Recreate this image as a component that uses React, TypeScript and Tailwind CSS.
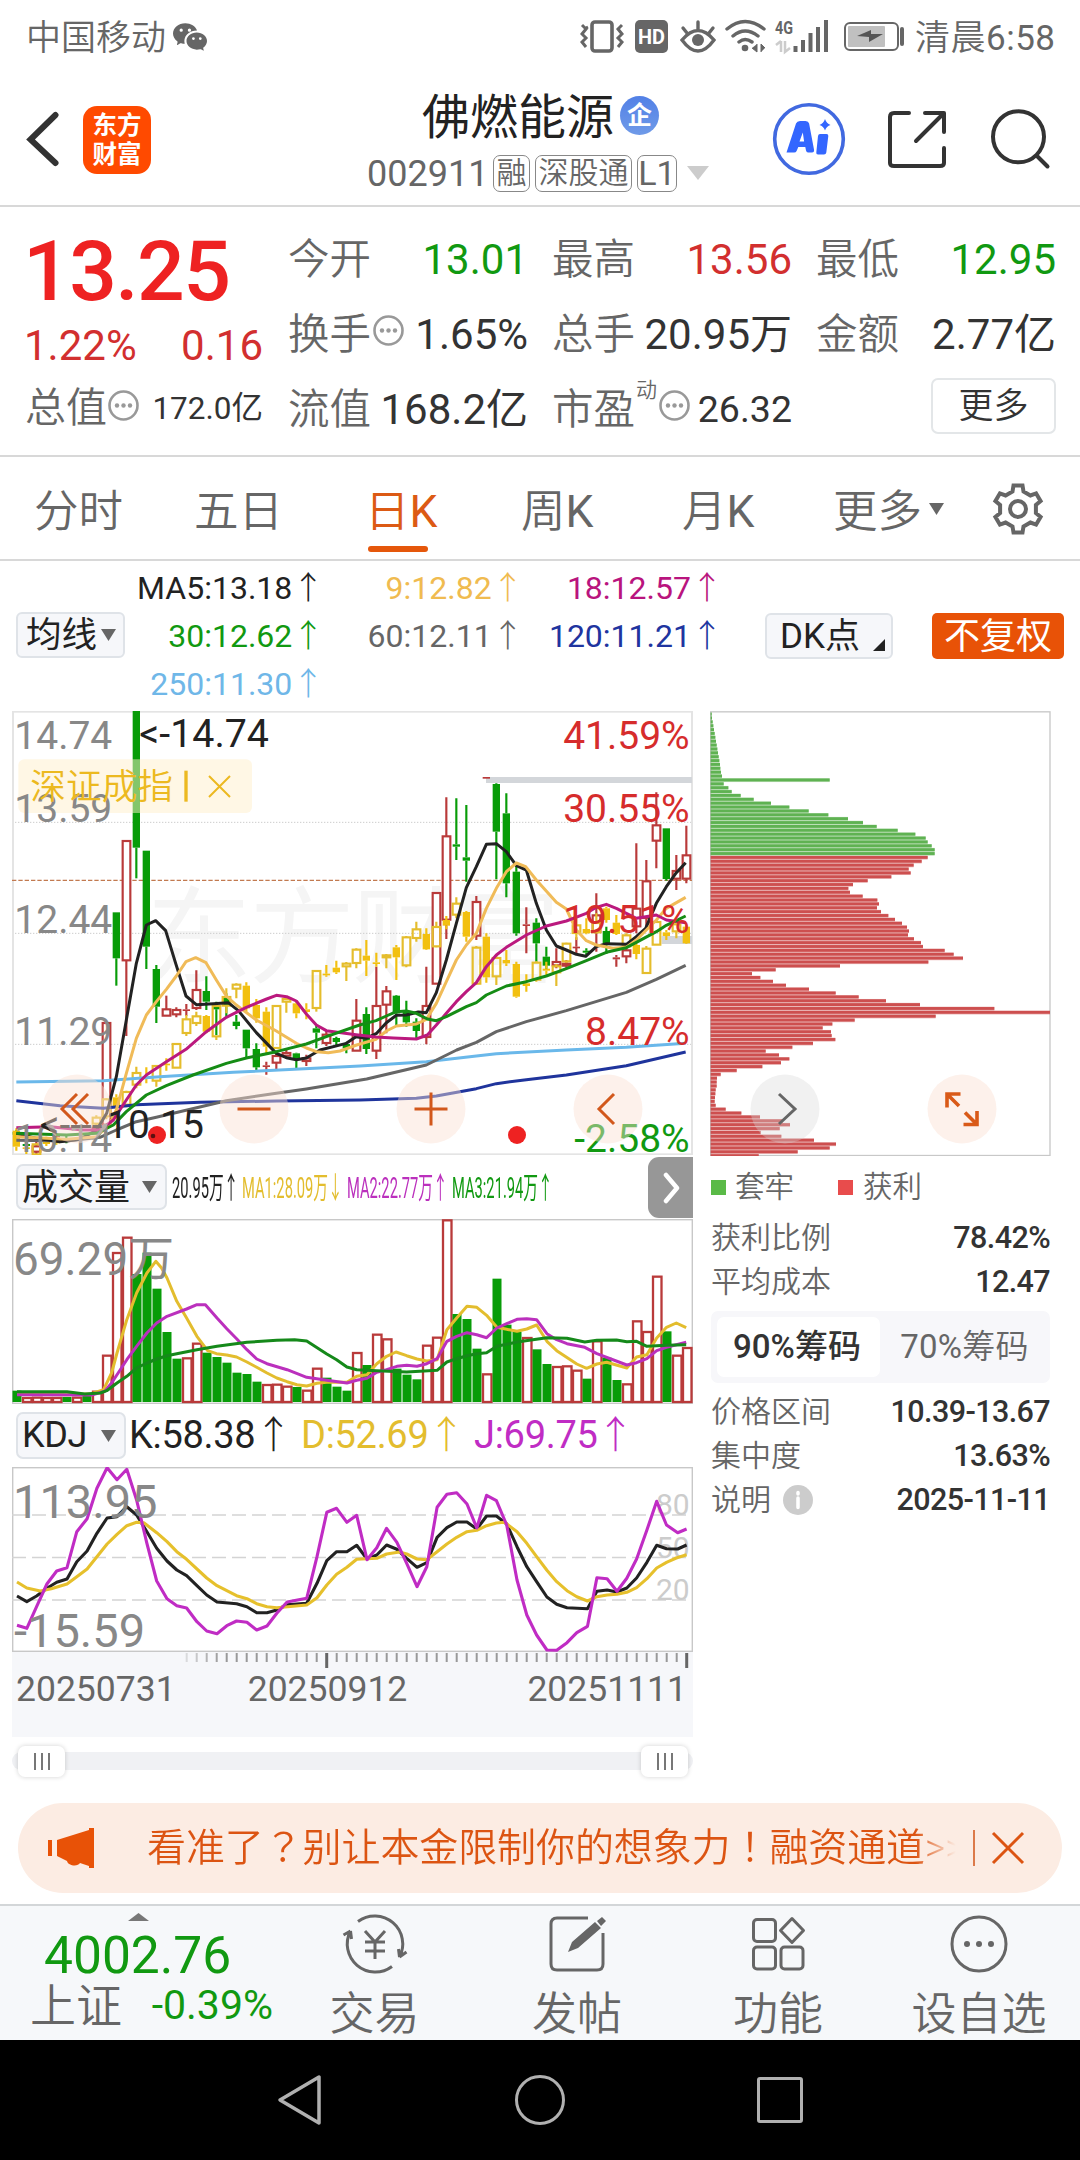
import type { ReactNode } from "react";
import { BsWechat } from "react-icons/bs";

type Point = [number, number];
// index, color, high, body top, body bottom, low
type Candle = [number, "r" | "g" | "y" | "Y", number, number, number, number];

const FONT = "font-['Roboto','Noto_Sans_CJK_SC',sans-serif]";

const STOCK: Candle[] = [
  [0, "g", 1290, 1296, 1304, 1310], [1, "g", 1326, 1332, 1338, 1344], [2, "r", 1325, 1338, 1356, 1362],
  [4, "r", 1300, 1306, 1312, 1318], [5, "g", 1308, 1314, 1320, 1330], [8, "r", 1275, 1282, 1290, 1300],
  [9, "r", 968, 968, 1275, 1275], [10, "g", 637, 637, 775, 857], [11, "r", 422, 422, 782, 1008],
  [12, "g", 33, 33, 443, 535], [13, "g", 452, 452, 740, 807], [14, "g", 795, 807, 920, 969],
  [15, "r", 887, 927, 948, 948], [16, "r", 922, 929, 944, 952], [17, "r", 912, 928, 932, 948],
  [18, "r", 811, 869, 925, 930], [19, "g", 829, 873, 905, 930], [20, "g", 905, 920, 928, 1005],
  [21, "g", 880, 890, 918, 950], [22, "g", 945, 965, 978, 988], [23, "g", 989, 989, 1045, 1072],
  [24, "g", 1030, 1047, 1102, 1110], [25, "r", 1085, 1096, 1101, 1124], [26, "r", 1055, 1067, 1089, 1107],
  [27, "r", 1050, 1058, 1068, 1076], [28, "g", 1058, 1060, 1074, 1107], [29, "r", 1064, 1074, 1084, 1098],
  [30, "g", 978, 985, 998, 1045], [31, "r", 990, 1003, 1030, 1038], [32, "g", 1010, 1014, 1026, 1040],
  [33, "g", 1026, 1032, 1045, 1060], [34, "r", 897, 961, 1053, 1053], [35, "g", 922, 942, 1047, 1062],
  [36, "r", 800, 917, 1053, 1077], [37, "r", 858, 873, 915, 1000], [38, "g", 885, 887, 940, 975],
  [39, "g", 902, 935, 967, 980], [40, "g", 955, 965, 993, 1020], [41, "r", 800, 917, 1012, 1033],
  [42, "r", 578, 578, 852, 852], [43, "r", 292, 408, 660, 717], [44, "g", 295, 433, 440, 480],
  [45, "g", 315, 472, 482, 545], [46, "r", 588, 605, 708, 720], [47, "r", 231, 231, 235, 235],
  [48, "g", 250, 252, 395, 538], [49, "g", 280, 340, 550, 592], [50, "g", 495, 515, 700, 707],
  [51, "r", 622, 673, 677, 760], [52, "g", 655, 668, 730, 785], [53, "g", 740, 770, 797, 810],
  [54, "r", 745, 785, 797, 805], [55, "r", 780, 790, 798, 805], [56, "r", 712, 740, 744, 760],
  [57, "g", 745, 752, 758, 768], [58, "r", 580, 645, 697, 755], [59, "g", 680, 693, 730, 762],
  [60, "r", 765, 772, 778, 800], [61, "r", 740, 750, 770, 790], [62, "r", 430, 625, 680, 700],
  [63, "r", 480, 543, 655, 690], [64, "r", 277, 375, 423, 505], [65, "g", 385, 385, 537, 542],
  [66, "r", 465, 512, 537, 570], [67, "r", 377, 465, 537, 550],
];

const INDEX: Candle[] = [
  [0, "Y", 1285, 1292, 1340, 1352], [1, "Y", 1328, 1342, 1346, 1362], [2, "y", 1330, 1332, 1364, 1364],
  [3, "Y", 1310, 1322, 1332, 1338], [4, "Y", 1318, 1324, 1330, 1334], [8, "y", 1246, 1252, 1272, 1280],
  [9, "y", 1195, 1197, 1250, 1258], [10, "Y", 1183, 1192, 1225, 1235], [11, "y", 1172, 1175, 1215, 1222],
  [12, "y", 1100, 1118, 1155, 1165], [13, "Y", 1102, 1131, 1136, 1150], [14, "y", 1095, 1097, 1143, 1160],
  [15, "Y", 1075, 1091, 1096, 1112], [16, "y", 1031, 1031, 1104, 1104], [17, "y", 945, 957, 1000, 1008],
  [18, "y", 935, 948, 970, 978], [19, "Y", 945, 948, 995, 1000], [20, "y", 910, 917, 1010, 1020],
  [21, "y", 865, 890, 918, 940], [22, "y", 850, 853, 867, 895], [23, "Y", 847, 857, 925, 935],
  [24, "Y", 897, 915, 955, 968], [25, "Y", 922, 935, 1040, 1062], [26, "y", 917, 917, 1045, 1045],
  [27, "y", 888, 896, 906, 938], [28, "Y", 905, 910, 940, 955], [29, "Y", 910, 928, 936, 958],
  [30, "y", 812, 812, 925, 935], [31, "Y", 795, 821, 826, 830], [32, "Y", 782, 803, 817, 822],
  [33, "y", 786, 790, 800, 843], [34, "y", 745, 748, 790, 805], [35, "Y", 720, 767, 782, 828],
  [36, "Y", 758, 787, 792, 800], [37, "y", 762, 765, 773, 805], [38, "Y", 735, 742, 772, 840],
  [39, "y", 708, 711, 797, 802], [40, "y", 665, 687, 715, 725], [41, "Y", 685, 702, 748, 750],
  [42, "y", 665, 680, 740, 742], [43, "Y", 648, 660, 677, 688], [44, "y", 592, 610, 645, 655],
  [45, "Y", 633, 636, 710, 725], [46, "y", 738, 742, 852, 854], [47, "Y", 700, 710, 832, 848],
  [48, "y", 765, 773, 830, 855], [49, "Y", 750, 780, 790, 798], [50, "Y", 785, 792, 890, 893],
  [51, "Y", 823, 850, 858, 875], [52, "y", 784, 787, 840, 845], [53, "Y", 785, 806, 812, 825],
  [54, "y", 792, 798, 818, 858], [55, "y", 728, 730, 785, 788], [56, "y", 655, 675, 700, 720],
  [57, "Y", 655, 687, 700, 703], [58, "y", 640, 668, 698, 700], [59, "Y", 620, 625, 660, 668],
  [60, "Y", 645, 668, 702, 705], [61, "y", 700, 705, 740, 745], [62, "Y", 730, 735, 762, 778],
  [63, "y", 738, 745, 820, 822], [64, "y", 660, 665, 735, 735], [65, "Y", 690, 697, 708, 720],
  [66, "y", 668, 672, 695, 715], [67, "Y", 676, 680, 730, 732],
];

const MA_LINES: { color: string; points: string }[] = [
  { color: "#6ab8ea", points: "49,1146 310,1142 480,1130 700,1117 1080,1098 1279,1085 1429,1068 1489,1061 1699,1050 1879,1042 2057,1030" },
  { color: "#1f349c", points: "49,1202 180,1217 310,1225 409,1214 600,1207 830,1203 1080,1200 1249,1195 1309,1188 1429,1166 1489,1151 1579,1139 1699,1125 1879,1097 2057,1056" },
  { color: "#666666", points: "49,1321 200,1323 300,1312 349,1290 409,1265 469,1252 679,1202 829,1180 919,1167 1100,1137 1180,1118 1279,1095 1370,1050 1429,1027 1489,995 1579,965 1699,932 1879,877 1969,838 2057,796" },
  { color: "#222222", points: "49,1300 110,1315 180,1325 240,1318 290,1290 320,1240 349,1130 379,960 409,790 439,675 467,662 497,692 527,790 558,888 589,914 640,911 685,908 715,932 769,998 829,1060 859,1073 889,1079 919,1074 960,1050 1039,1030 1068,1010 1098,1015 1130,1000 1159,968 1189,946 1219,945 1255,936 1279,938 1309,878 1339,780 1369,670 1399,563 1429,500 1459,433 1489,431 1519,455 1549,497 1579,510 1609,610 1639,690 1669,738 1699,750 1729,763 1757,769 1789,740 1819,731 1879,733 1909,710 1937,685 1969,610 1999,560 2029,518 2057,488" },
  { color: "#f0bb58", points: "49,1310 200,1318 290,1310 330,1270 349,1230 379,1120 409,1015 439,945 469,905 499,868 529,828 558,785 587,773 618,788 649,840 679,888 709,915 769,960 829,993 889,1030 919,1044 949,1055 985,1058 1020,1053 1070,1035 1128,1018 1159,993 1189,978 1249,972 1279,958 1309,910 1339,845 1369,780 1399,735 1429,700 1459,625 1489,565 1519,515 1549,489 1577,500 1609,540 1669,607 1699,627 1729,690 1759,722 1789,735 1839,745 1879,742 1909,720 1969,660 1999,625 2057,592" },
  { color: "#bb197e", points: "49,1283 150,1280 250,1290 300,1290 340,1260 379,1200 409,1155 439,1125 499,1085 558,1048 619,995 679,952 739,922 800,897 829,886 860,890 889,903 919,942 949,975 979,992 1068,1004 1128,1011 1180,1014 1249,1017 1282,1005 1309,975 1339,940 1369,905 1399,875 1429,848 1459,800 1489,765 1519,742 1579,705 1639,678 1699,663 1759,640 1789,622 1819,613 1849,625 1879,640 1909,655 1969,645 1999,660 2057,668" },
  { color: "#158c15", points: "49,1300 200,1305 290,1300 340,1275 379,1235 439,1185 499,1157 579,1125 679,1090 739,1074 829,1055 919,1032 979,1010 1079,975 1128,962 1159,948 1189,935 1219,933 1249,940 1282,957 1309,962 1339,950 1369,935 1399,920 1429,908 1459,885 1519,858 1579,845 1639,828 1699,806 1759,782 1819,757 1879,743 1909,727 1969,695 1999,676 2057,648" },
];

const CHIPS = [
  3, 4, 6, 8, 10, 12, 14, 16, 18, 20, 22, 24, 26, 28, 29, 31, 34, 357, 39, 53, 63, 90, 129, 181, 236, 294, 353, 412,
  457, 498, 561, 614, 645, 651, 663, 672, 672, 651, 633, 609, 594, 600, 542, 471, 427, 413, 418, 456, 500, 505, 499,
  511, 533, 553, 574, 589, 595, 592, 610, 631, 637, 702, 729, 757, 653, 388, 195, 124, 149, 187, 226, 295, 375, 444,
  526, 628, 851, 1018, 675, 432, 365, 336, 361, 363, 374, 307, 245, 165, 205, 236, 211, 155, 78, 30, 19, 18, 18, 15,
  14, 13, 12, 15, 45, 92, 148, 216, 238, 207, 150, 212, 310, 376, 357, 261, 144,
];
const FIRST_PROFIT = 37;

const VOLUMES =
  "g693 r712 r711 r712 r712 g712 r711 g706 r693 r585 r277 r231 g343 g279 g387 g517 g597 r593 r549 g579 g592 g609 g639 g643 g666 r673 r672 r678 g682 r690 r624 g654 g681 g693 r577 g616 r522 r536 g627 g645 g659 r555 r531 r179 g463 g478 g567 r641 g357 g495 g517 r532 g569 g613 r619 r617 r630 g657 r542 g594 g661 r671 r482 r514 r348 g515 r585 r562";

const VOLUME_LINES = [
  { color: "#e3bd2e", points: "38,703 150,705 205,702 232,690 250,640 262,580 284,480 306,400 329,340 349,305 362,325 374,355 396,425 418,475 441,530 465,573 485,582 508,586 530,592 553,607 575,623 598,640 620,655 643,666 665,675 687,679 710,671 732,668 777,668 799,650 822,645 844,612 866,590 887,577 911,588 934,598 956,604 979,600 1001,510 1023,475 1046,440 1068,443 1090,467 1113,503 1135,509 1158,515 1180,508 1202,496 1225,545 1247,573 1292,613 1314,626 1337,613 1359,608 1404,625 1426,592 1449,585 1471,535 1493,503 1515,490 1537,504" },
  { color: "#bb30bd", points: "38,705 205,706 235,695 250,670 284,600 306,560 329,520 351,490 374,470 418,448 441,435 460,435 486,475 508,507 530,537 553,570 575,598 598,612 643,630 687,653 732,662 777,670 799,662 822,656 844,638 866,630 889,620 911,617 934,620 956,612 979,597 1001,545 1023,530 1046,519 1068,525 1090,534 1113,505 1135,492 1158,479 1180,477 1202,480 1225,522 1247,540 1270,552 1310,563 1337,582 1404,616 1426,609 1449,597 1471,573 1493,563 1537,548" },
  { color: "#15891a", points: "38,696 150,696 190,703 225,700 239,693 262,670 284,650 306,625 329,610 351,598 374,588 396,582 441,570 486,560 553,548 620,542 660,540 687,544 732,583 754,600 777,622 799,630 844,633 911,637 979,632 1001,607 1023,597 1046,588 1068,582 1090,579 1113,560 1158,547 1225,534 1270,536 1310,547 1337,542 1381,541 1404,546 1426,545 1449,560 1493,557 1537,555" },
];

const KDJ_LINES = [
  { color: "#222222", points: "38,408 60,425 82,408 105,385 127,367 150,357 172,305 195,273 217,220 240,174 262,170 284,140 306,165 329,215 351,265 374,303 396,330 418,347 441,377 463,405 486,426 530,431 553,440 575,458 598,458 620,450 643,434 687,430 710,370 732,302 754,275 777,275 799,256 822,297 844,285 866,255 889,268 911,295 934,322 956,308 979,232 1001,203 1023,186 1046,186 1068,207 1090,168 1112,168 1135,192 1158,260 1180,320 1202,365 1225,411 1247,433 1270,443 1316,446 1337,394 1360,390 1382,396 1404,384 1426,354 1449,307 1471,256 1493,266 1518,267 1538,255" },
  { color: "#e6c02c", points: "38,366 60,384 90,393 115,386 150,372 172,350 195,327 217,290 240,252 262,223 284,197 306,187 322,188 351,218 374,245 396,275 418,298 463,354 486,377 530,407 553,416 575,431 598,440 620,443 687,435 710,413 732,375 754,343 777,322 799,298 844,295 866,282 895,276 911,282 934,297 956,299 979,275 1001,252 1023,232 1046,215 1068,211 1090,197 1112,189 1130,187 1158,215 1180,250 1202,290 1225,331 1247,365 1270,392 1292,410 1316,423 1337,410 1360,405 1382,403 1404,397 1426,383 1449,356 1471,324 1493,307 1515,294 1538,284" },
  { color: "#c02cc4", points: "38,496 60,505 82,440 105,372 127,333 150,323 172,215 195,176 217,85 240,23 262,59 284,28 306,120 329,250 351,363 374,416 396,437 418,444 441,485 463,513 486,521 508,497 530,483 553,487 575,510 598,498 620,460 643,426 687,415 710,290 732,157 754,145 777,187 799,166 822,299 844,263 866,205 889,247 911,310 934,380 956,320 979,142 1001,103 1023,98 1046,132 1068,204 1090,106 1112,122 1135,195 1158,360 1180,465 1202,525 1225,570 1247,571 1270,548 1292,518 1316,499 1337,353 1360,356 1382,394 1404,355 1426,297 1449,210 1471,124 1493,195 1518,218 1538,207" },
];

// The sub charts keep their points on a 2.24 x 3 grid
const scalePoints = (points: string, top: number) =>
  points
    .split(" ")
    .map((pair) => {
      const [x, y] = pair.split(",").map(Number) as Point;
      return `${(x / 2.24 - 12).toFixed(1)},${((y - top) / 3).toFixed(1)}`;
    })
    .join(" ");

function MoreDots() {
  return (
    <svg className="size-[31px] shrink-0" viewBox="0 0 31 31">
      <circle cx="15.5" cy="15.5" r="14" fill="none" stroke="#999" strokeWidth="2.6" />
      {[9, 15.5, 22].map((x) => (
        <circle key={x} cx={x} cy="15.5" r="2.2" fill="#999" />
      ))}
    </svg>
  );
}

function Caret({ className }: { className: string }) {
  return (
    <svg className={className} viewBox="0 0 16 12" preserveAspectRatio="none">
      <path d="M0 0h16l-8 12z" fill="currentColor" />
    </svg>
  );
}

function StatusBar() {
  return (
    <div className="flex h-[74px] items-center pl-[26px] text-[35px] text-[#666]">
      <span className="mt-[2px] w-[147px] leading-none font-[350] whitespace-nowrap">中国移动</span>
      <BsWechat className="mt-[-2px] size-[34px]" />
      <svg className="ml-[373px] h-[36px] w-[325px]" viewBox="580 19 325 36" fill="none" stroke="#666">
        <rect x="592" y="22" width="20" height="29" rx="3" strokeWidth="3.6" />
        <path d="M582 25l4 4-4 5 4 4-4 4 4 5M588 27l-2 1M622 25l-4 4 4 5-4 4 4 4-4 5" strokeWidth="3" />
        <rect x="635" y="20" width="33" height="33" rx="5" fill="#666" stroke="none" />
        <text x="651.5" y="44" fontSize="20" fontWeight="700" fill="#fff" stroke="none" textAnchor="middle" textLength="27" lengthAdjust="spacingAndGlyphs">
          HD
        </text>
        <path d="M682 40q16-19 32 0q-16 22-32 0zM698 22v8M683 28l4 5M713 28l-4 5" strokeWidth="3.4" strokeLinecap="round" />
        <circle cx="698" cy="40" r="6" fill="#666" stroke="none" />
        <path d="M727 29q18-15 37 0M733 36q12-10 25 0M739 42q6-5 13 0" strokeWidth="3.4" strokeLinecap="round" />
        <circle cx="745" cy="48" r="3.3" fill="#666" stroke="none" />
        <path d="M757 44v8l-5-4M761 52v-8l4 4" fill="#666" strokeWidth="1" />
        <text x="775" y="34" fontSize="19" fontWeight="700" fill="#666" stroke="none" textLength="18" lengthAdjust="spacingAndGlyphs">
          4G
        </text>
        <path d="M781 41v11M776 45l5-4M785 41v11l5-4" stroke="#ccc" strokeWidth="2.5" />
        <path d="M795.5 46v6M803 40v12M810.5 33v19M818 27v25M826 20v32" strokeWidth="4" />
        <rect x="845" y="23" width="53" height="27" rx="5" strokeWidth="2" />
        <rect x="848" y="26" width="37" height="21" rx="1" fill="#c0c0c0" stroke="none" />
        <path d="M857 36l14-6v4h12l-14 8v-5z" fill="#555" stroke="none" />
        <path d="M902 29v15" strokeWidth="4" strokeLinecap="round" />
      </svg>
      <span className="mt-[2px] ml-[10px] leading-none tracking-[0.5px] whitespace-nowrap">
        <span className="font-[350]">清晨</span>6:58
      </span>
    </div>
  );
}

function Header() {
  return (
    <header className="flex h-[133px] border-b-2 border-[#d8d8d8] pl-[26px]">
      <svg className="mt-[37px] h-[56px] w-[34px]" viewBox="0 0 34 56">
        <path d="M29.500 4L4.500 28.500l25 23.500" fill="none" stroke="#333" strokeWidth="6" strokeLinecap="round" strokeLinejoin="miter" />
      </svg>
      <div className="mt-[32px] ml-[23px] flex h-[68px] w-[68px] flex-col items-center justify-center rounded-[14px] bg-[#ff4a00] text-[24.500px] leading-[29px] font-bold text-white">
        <span>东方</span>
        <span>财富</span>
      </div>
      <div className="ml-[216px] w-[351px]">
        <div className="mt-[17px] flex h-[50px] items-center pl-[55px]">
          <h1 className="mt-[3px] text-[48px] leading-none whitespace-nowrap text-[#222]">佛燃能源</h1>
          <span className="mt-[-1px] ml-[6px] flex size-[39px] items-center justify-center rounded-full bg-linear-to-b from-[#5280e6] to-[#6f9ae8] text-[25px] leading-none font-bold text-white">
            企
          </span>
        </div>
        <div className="mt-[13px] flex h-[38px] items-center text-[30px] leading-none text-[#666]">
          <span className="mt-[1px] w-[126px] text-[36px]">002911</span>
          <span className="flex h-[37px] w-[37px] items-center justify-center rounded-[7px] border border-[#888] font-[350]">融</span>
          <span className="ml-[5px] flex h-[37px] w-[97px] items-center justify-center rounded-[7px] border border-[#888] font-[350] whitespace-nowrap">
            深股通
          </span>
          <span className="ml-[5px] flex h-[37px] w-[40px] items-center justify-center rounded-[7px] border border-[#888] text-[34px]">
            L1
          </span>
          <Caret className="ml-[10px] h-[14px] w-[22px] text-[#ccc]" />
        </div>
      </div>
      <svg className="mt-[28px] ml-[54px] h-[74px] w-[74px]" viewBox="0 0 74 74">
        <circle cx="37" cy="37" r="34.300" fill="none" stroke="#4169e0" strokeWidth="3.600" />
        <path d="M14.500 50.500L24 21.500q1-2.500 4-2.500h5.500q3 0 3.600 2.500L42 47.500q.5 3-2 3h-4q-1.500 0-2-2l-.7-3.500h-7l-1.700 4q-.7 1.500-2.500 1.500zM27.500 39.500h4.600l-1.300-9z" fill="#3366ff" fillRule="evenodd" />
        <path d="M48 32h6.500q2 0 1.800 2l-2 16.500q-.3 2-2.300 2H46q-2 0-1.700-2L46 34q.3-2 2-2zM53 17q1.500 4.500 5.500 6-4 1.300-5.500 5.500-1.500-4.200-5.500-5.500 4-1.500 5.500-6z" fill="#3366ff" />
      </svg>
      <svg className="mt-[34px] ml-[39px] h-[64px] w-[64px]" viewBox="0 0 64 64" fill="none" stroke="#333" strokeWidth="4" strokeLinecap="round" strokeLinejoin="round">
        <path d="M24 5H9q-4 0-4 4v46q0 3 4 3h46q4 0 4-3V40M40 5h19v19M58 6L31 33" />
      </svg>
      <svg className="mt-[33px] ml-[39px] h-[64px] w-[64px]" viewBox="0 0 64 64" fill="none" stroke="#333" strokeWidth="4" strokeLinecap="round">
        <circle cx="30.500" cy="29.800" r="25.500" />
        <path d="M49 49l10.500 10.500" />
      </svg>
    </header>
  );
}

const RED = "text-[#d22f2f]";
const GREEN = "text-[#119911]";
const DARK = "text-[#333]";

function Quote({ label, value, color, children }: { label: string; value: string; color: string; children?: ReactNode }) {
  return (
    <div className="flex h-[75px] items-center justify-between text-[42px] leading-none whitespace-nowrap">
      <span className="flex items-center text-[41.500px] text-[#666]">
        <span className="font-[350]">{label}</span>
        {children}
      </span>
      <span className={color}>{value}</span>
    </div>
  );
}

function QuotePanel() {
  return (
    <section className="flex h-[250px] border-b-2 border-[#d8d8d8] pt-[15px] pl-[25px]">
      <div className="w-[238px]">
        <div className="mt-[5px] -ml-[2px] h-[91px] text-[84px] leading-[90px] font-medium tracking-[-1.600px] text-[#ee2222]">13.25</div>
        <div className={`flex h-[56px] items-center justify-between text-[42px] leading-none ${RED}`}>
          <span className="-ml-[1px]">1.22%</span>
          <span>0.16</span>
        </div>
        <div className="flex h-[69px] items-center whitespace-nowrap">
          <span className="text-[41px] leading-none font-[350] text-[#666]">总值</span>
          <span className="mt-[-7px] ml-[1px] flex">
            <MoreDots />
          </span>
          <span className="ml-auto text-[31.500px] leading-none text-[#333]">172.0亿</span>
        </div>
      </div>
      <div className="ml-[25px] w-[240px]">
        <Quote label="今开" value="13.01" color={GREEN} />
        <Quote label="换手" value="1.65%" color={DARK}>
          <span className="mt-[-8px] ml-[2px] flex">
            <MoreDots />
          </span>
        </Quote>
        <Quote label="流值" value="168.2亿" color={DARK} />
      </div>
      <div className="ml-[24px] w-[240px]">
        <Quote label="最高" value="13.56" color={RED} />
        <Quote label="总手" value="20.95万" color={DARK} />
        <Quote label="市盈" value="26.32" color="text-[#333] text-[37.500px]">
          <span className="mt-[-38px] ml-[1px] text-[21px] font-[350]">动</span>
          <span className="mt-[-8px] ml-[2px] flex">
            <MoreDots />
          </span>
        </Quote>
      </div>
      <div className="ml-[24px] w-[240px]">
        <Quote label="最低" value="12.95" color={GREEN} />
        <Quote label="金额" value="2.77亿" color={DARK} />
        <div className="mt-[6px] ml-auto flex h-[56px] w-[125px] items-center justify-center rounded-[7px] border-2 border-[#e3e6e8] text-[35px] leading-none font-[350] text-[#333]">
          更多
        </div>
      </div>
    </section>
  );
}

function Gear() {
  const tooth: Point[] = [[-5.5, -17.5], [-4.5, -23.5], [4.5, -23.5], [5.5, -17.5]];
  const points = [0, 1, 2, 3, 4, 5]
    .flatMap((k) => {
      const a = (k * Math.PI) / 3;
      return tooth.map(([x, y]) => `${x * Math.cos(a) - y * Math.sin(a)},${x * Math.sin(a) + y * Math.cos(a)}`);
    })
    .join(" ");
  return (
    <svg className="size-[54px]" viewBox="-27 -27 54 54" fill="none" stroke="#666" strokeWidth="4">
      <polygon points={points} />
      <circle r="8" />
    </svg>
  );
}

function Tabs() {
  return (
    <nav className="flex h-[104px] border-b-2 border-[#d8d8d8] text-[44.500px] leading-[110px] font-[350] whitespace-nowrap text-[#666]">
      <span className="w-[158px] pl-[34px]">分时</span>
      <span className="w-[207px] pl-[36px]">五日</span>
      <span className="relative w-[156px] text-[#dc5a14]">
        日<span className="font-normal">K</span>
        <span className="absolute top-[89px] left-[3px] h-[6px] w-[60px] rounded-full bg-[#e5570b]" />
      </span>
      <span className="w-[161px]">
        周<span className="font-normal">K</span>
      </span>
      <span className="w-[151px]">
        月<span className="font-normal">K</span>
      </span>
      <span className="w-[96px]">更多</span>
      <Caret className="mt-[46px] h-[12px] w-[15px]" />
      <span className="mt-[25px] ml-[47px]">
        <Gear />
      </span>
    </nav>
  );
}

const AVERAGES = [
  ["MA5:13.18", "text-[#222]"],
  ["9:12.82", "text-[#f0bb50]"],
  ["18:12.57", "text-[#b9147e]"],
  ["30:12.62", "text-[#119911]"],
  ["60:12.11", "text-[#666]"],
  ["120:11.21", "text-[#20349f]"],
  ["250:11.30", "text-[#6fb7e8]"],
];

function Averages() {
  return (
    <div className="flex h-[150px] pl-[16px] whitespace-nowrap">
      <div className="mt-[51px] flex h-[46px] w-[109px] items-center justify-between rounded-[6px] border-2 border-[#dfe3e8] bg-[#f6f7fa] pr-[7px] pl-[8px] text-[35.500px] leading-none text-[#222]">
        <span className="mt-[2px]">均线</span>
        <Caret className="h-[12px] w-[15px] text-[#666]" />
      </div>
      <div className="mt-[3px] grid h-[144px] w-[598px] grid-cols-3 grid-rows-3">
        {AVERAGES.map(([label, color]) => (
          <span key={label} className={`text-right text-[32px] leading-[48px] ${color}`}>
            {label}
            <span className="font-light">↑</span>
          </span>
        ))}
      </div>
      <div className="relative mt-[52px] ml-[42px] h-[46px] w-[128px] rounded-[6px] border-2 border-[#dfe3e8] bg-[#f6f7fa] pl-[13px] text-[35px] leading-[44px] text-[#222]">
        DK点
        <svg className="absolute right-[6px] bottom-[6px] size-[12px]" viewBox="0 0 12 12">
          <path d="M12 0v12H0z" fill="#222" />
        </svg>
      </div>
      <div className="mt-[52px] ml-[39px] h-[46px] w-[132px] rounded-[5px] bg-[#e85207] text-center text-[36px] leading-[48px] text-white">
        不复权
      </div>
    </div>
  );
}

function Candles({ data }: { data: Candle[] }) {
  const colors = { r: "#b93a3a", g: "#089c08", y: "#e5bd2c", Y: "#f2c010" };
  return (
    <>
      {data.map(([i, kind, high, top, bottom, low]) => {
        const x = 49 + 30 * i;
        const solid = kind === "g" || kind === "Y" || bottom - top < 8;
        return (
          <g key={i} stroke={colors[kind]} strokeWidth="6.500">
            <path d={`M${x} ${high}V${top}M${x} ${bottom}V${low}`} />
            {solid ? (
              <rect x={x - 11} y={top} width="22" height={Math.max(bottom - top, 5)} fill={colors[kind]} stroke="none" />
            ) : (
              <rect x={x - 11} y={top + 1} width="23" height={bottom - top - 2} fill={kind === "r" ? "#fff" : "none"} />
            )}
          </g>
        );
      })}
    </>
  );
}

function RoundButton({ className, children }: { className: string; children: ReactNode }) {
  return (
    <svg className={`absolute top-[363px] size-[70px] ${className}`} viewBox="-35 -35 70 70" fill="none" stroke="currentColor" strokeWidth="3">
      {children}
    </svg>
  );
}

const PRICE_LABELS: [string, string, number][] = [
  ["14.74", "41.59%", 147],
  ["13.59", "30.55%", 366],
  ["12.44", "19.51%", 698],
  ["11.29", "8.47%", 1034],
  ["10.14", "-2.58%", 1356],
];

function MainChart() {
  return (
    <div className="relative h-[444px]">
      <svg className="block h-[444px] w-[681px]" viewBox="36 33 2043 1332">
        <text x="440" y="822" fontSize="315" fill="#f5f5f5" textLength="1240">
          东方财富
        </text>
        {[367, 700, 1033].map((y) => (
          <path key={y} d={`M36 ${y}H2076`} stroke="#ccc" strokeWidth="3" strokeDasharray="4 5" />
        ))}
        <rect x="39" y="35" width="2037" height="1328" fill="none" stroke="#e4e4e4" strokeWidth="6" />
        <path d="M1458 240H2076" stroke="#d3d6da" strokeWidth="18" />
        <path d="M1985 720H2076" stroke="#d3d6da" strokeWidth="24" />
        <path d="M36 541H2076" stroke="#c27a50" strokeWidth="3.500" strokeDasharray="13 6" />
        <Candles data={STOCK} />
        <Candles data={INDEX} />
        {MA_LINES.map(({ color, points }) => (
          <polyline key={color} points={points} fill="none" stroke={color} strokeWidth="9" strokeLinejoin="round" />
        ))}
        <rect x="55" y="178" width="701" height="161" rx="18" fill="#ffefcc" fillOpacity=".5" />
        <g fontSize="117">
          {PRICE_LABELS.map(([price, percent, y]) => (
            <g key={price}>
              <text x="43" y={y} fill="#888">
                {price}
              </text>
              <text x="2069" y={y} textAnchor="end" fill={percent.startsWith("-") ? "#119911" : "#d62c2c"}>
                {percent}
              </text>
            </g>
          ))}
          <text x="418" y="141" fontSize="118" fill="#222">
            &lt;-14.74
          </text>
          <text x="119" y="1313" fill="#222">
            &lt;----<tspan x="318">10.15</tspan>
          </text>
        </g>
        <text x="91" y="297" fontSize="107" fontWeight="350" fill="#ecb920">
          深证成指
        </text>
        <path d="M558 212V305" stroke="#ecb920" strokeWidth="10" />
        <path d="M627 228L690 291M690 228L627 291" stroke="#ecb920" strokeWidth="6" />
        <circle cx="471" cy="1305" r="27" fill="#ee2222" />
        <circle cx="459" cy="1308" r="7" fill="#5c1010" />
        <circle cx="1551" cy="1305" r="27" fill="#ee2222" />
      </svg>
      <RoundButton className="left-[30px] text-[#d2581c]">
        <circle r="34.500" fill="#fbe0d2" fillOpacity=".45" stroke="none" />
        <path d="M0-15L-15 0 0 15M11-15L-4 0l15 15" />
      </RoundButton>
      <RoundButton className="left-[207px] text-[#d2581c]">
        <circle r="34.500" fill="#fbe0d2" fillOpacity=".45" stroke="none" />
        <path d="M-16.500 0h33" />
      </RoundButton>
      <RoundButton className="left-[384px] text-[#d2581c]">
        <circle r="34.500" fill="#fbe0d2" fillOpacity=".45" stroke="none" />
        <path d="M-16.500 0h33M0-16.500v33" />
      </RoundButton>
      <RoundButton className="left-[561px] text-[#d2581c]">
        <circle r="34.500" fill="#fbe0d2" fillOpacity=".45" stroke="none" />
        <path d="M6-15L-9 0 6 15" />
      </RoundButton>
    </div>
  );
}

function VolumeValue({ label, arrow, className }: { label: string; arrow: string; className: string }) {
  return (
    <span className={`flex h-[46px] ${className}`}>
      <span className="origin-left scale-x-[0.49] text-[30px] leading-[48px] whitespace-nowrap">
        {label}
        {arrow}
      </span>
    </span>
  );
}

function VolumeChart() {
  return (
    <>
      <div className="relative flex h-[64px] pt-[9px] pl-[4px]">
        <div className="flex h-[46px] w-[151px] items-center justify-between rounded-[7px] border-2 border-[#dfe3e8] bg-[#f6f7fa] pr-[8px] pl-[4px] text-[36px] leading-none whitespace-nowrap text-[#222]">
          <span className="mt-[2px]">成交量</span>
          <Caret className="h-[12px] w-[15px] text-[#666]" />
        </div>
        <VolumeValue label="20.95万" arrow="↑" className="ml-[5px] w-[70px] text-[#222]" />
        <VolumeValue label="MA1:28.09万" arrow="↓" className="w-[105px] text-[#e3bd2e]" />
        <VolumeValue label="MA2:22.77万" arrow="↑" className="w-[105px] text-[#bb30bd]" />
        <VolumeValue label="MA3:21.94万" arrow="↑" className="w-[105px] text-[#119911]" />
        <div className="absolute top-[2px] right-0 flex h-[61px] w-[45px] items-center justify-center rounded-l-[11px] bg-[#979797] pl-[3px]">
          <svg className="h-[32px] w-[20px]" viewBox="0 0 20 32">
            <path d="M4 3l11 13L4 29" fill="none" stroke="#fff" strokeWidth="4.500" strokeLinecap="round" strokeLinejoin="round" />
          </svg>
        </div>
      </div>
      <svg className="block h-[185px] w-[681px]" viewBox="0 0 681 185">
        <rect x=".7" y=".7" width="679.600" height="183.600" fill="none" stroke="#c8c8c8" strokeWidth="1.400" />
        {VOLUMES.split(" ").map((bar, i) => {
          const top = (Number(bar.slice(1)) - 178) / 3;
          const x = 5 + 10 * i;
          return bar[0] === "g" ? (
            <rect key={i} x={x - 4.5} y={top} width="9" height={183 - top} fill="#089c08" />
          ) : (
            <rect key={i} x={x - 4} y={top + 1} width="8.500" height={182 - top} fill="#fff" stroke="#b93a3a" strokeWidth="2.300" />
          );
        })}
        {VOLUME_LINES.map(({ color, points }) => (
          <polyline key={color} points={scalePoints(points, 178)} fill="none" stroke={color} strokeWidth="3" strokeLinejoin="round" />
        ))}
        <text x="1" y="56" fontSize="47" fill="#888" textLength="161" lengthAdjust="spacingAndGlyphs">
          69.29万
        </text>
      </svg>
    </>
  );
}

function KdjChart() {
  const ticks = Array.from({ length: 51 }, (_, k) => k);
  return (
    <>
      <div className="flex h-[63px] pt-[8px] pl-[4px] text-[38px] leading-[47px] tracking-[-0.3px] whitespace-nowrap">
        <div className="flex h-[47px] w-[110px] items-center justify-between rounded-[7px] border-2 border-[#dfe3e8] bg-[#f6f7fa] pr-[8px] pl-[4px] text-[36px] text-[#222]">
          KDJ
          <Caret className="h-[12px] w-[15px] text-[#666]" />
        </div>
        <span className="ml-[3px] w-[172px] text-[#222]">
          K:58.38<span className="-ml-[1px] font-light">↑</span>
        </span>
        <span className="w-[173px] text-[#e3bd2e]">
          D:52.69<span className="-ml-[1px] font-light">↑</span>
        </span>
        <span className="text-[#c02cc4]">
          J:69.75<span className="-ml-[1px] font-light">↑</span>
        </span>
      </div>
      <svg className="block h-[185px] w-[681px]" viewBox="0 0 681 185">
        <rect x=".7" y=".7" width="679.600" height="183.600" fill="none" stroke="#c8c8c8" strokeWidth="1.400" />
        {[48, 90.5, 133].map((y) => (
          <path key={y} d={`M0 ${y}H680`} stroke="#d4d4d4" strokeWidth="1.500" strokeDasharray="14 6" />
        ))}
        <g fontSize="30" fill="#ccc">
          <text x="644" y="48">80</text>
          <text x="644" y="91">50</text>
          <text x="644" y="133">20</text>
        </g>
        {KDJ_LINES.map(({ color, points }) => (
          <polyline key={color} points={scalePoints(points, 21)} fill="none" stroke={color} strokeWidth="3.100" strokeLinejoin="round" />
        ))}
        <g fontSize="47" fill="#888">
          <text x="1" y="51">113.95</text>
          <text x="2" y="180">-15.59</text>
        </g>
      </svg>
      <div className="h-[85px] bg-[#f6f7fa]">
        <svg className="block h-[17px] w-[681px]" viewBox="0 0 681 17">
          {ticks.map((k) => {
            const long = k === 14 || k === 50;
            return (
              <path
                key={k}
                d={`M${174.7 + k * 10} 1V${long ? 16 : 10}`}
                stroke={long ? "#666" : "#999"}
                strokeWidth={long ? 3 : 2}
                opacity={Math.min(1, 0.3 + k * 0.2)}
              />
            );
          })}
        </svg>
        <div className="flex justify-between pr-[6px] pl-[4px] text-[35.500px] leading-[40px] text-[#666]">
          <span>20250731</span>
          <span className="-ml-[48px]">20250912</span>
          <span>20251111</span>
        </div>
      </div>
      <div className="mt-[15px] flex h-[18px] items-center justify-between rounded-full bg-[#f0f1f4] pr-[5px] pl-[6px]">
        <SliderHandle />
        <SliderHandle />
      </div>
    </>
  );
}

function SliderHandle() {
  return (
    <div className="flex h-[31px] w-[47px] items-center justify-center gap-[5px] rounded-[7px] bg-white shadow-[0_0_5px_rgba(0,0,0,0.18)]">
      <span className="h-[17px] w-[2px] bg-[#777]" />
      <span className="h-[17px] w-[2px] bg-[#777]" />
      <span className="h-[17px] w-[2px] bg-[#777]" />
    </div>
  );
}

function InfoRow({ label, value, children }: { label: string; value: string; children?: ReactNode }) {
  return (
    <div className="flex h-[44px] items-center justify-between leading-none whitespace-nowrap">
      <span className="flex items-center text-[30px] font-[350] text-[#666]">
        {label}
        {children}
      </span>
      <span className="text-[30.500px] font-medium tracking-[-0.6px] text-[#333]">{value}</span>
    </div>
  );
}

function ChipPanel() {
  return (
    <div className="w-[339px]">
      <div className="relative h-[445px]">
        <svg className="-ml-[1px] block h-[445px] w-[341px]" viewBox="60 32 1023 1335">
          <rect x="62" y="34.500" width="1018" height="1331" fill="none" stroke="#c8c8c8" strokeWidth="4" />
          {CHIPS.map((length, k) => (
            <g key={k} fill={k < FIRST_PROFIT ? "#5fb252" : "#cd4f4f"}>
              <rect x="62" y={36 + 11.62 * k} width={length} height="11.620" opacity=".45" />
              <rect x="62" y={37 + 11.62 * k} width={length} height="8.500" />
            </g>
          ))}
        </svg>
        <RoundButton className="left-[39px] text-[#666]">
          <circle r="34.500" fill="#d8d8d8" fillOpacity=".35" stroke="none" />
          <path d="M-6-15L10 0-6 15" />
        </RoundButton>
        <RoundButton className="left-[216px] text-[#d95a18]">
          <circle r="34.500" fill="#fbe0d2" fillOpacity=".45" stroke="none" />
          <path d="M-15-1.500V-15h13.500M-15-15L-3-3M15 2v13.500H1.500M15 15.500L3 3.500" strokeWidth="3.600" />
        </RoundButton>
      </div>
      <div className="flex h-[60px] items-center pt-[4px] pb-[1px] text-[29.500px] leading-none font-[350] text-[#666]">
        <span className="size-[15px] bg-[#5aba47]" />
        <span className="ml-[9px]">套牢</span>
        <span className="ml-[44px] size-[15px] bg-[#e84c4c]" />
        <span className="ml-[10px]">获利</span>
      </div>
      <InfoRow label="获利比例" value="78.42%" />
      <InfoRow label="平均成本" value="12.47" />
      <div className="mt-[7px] mb-[7px] flex h-[72px] items-center rounded-[7px] bg-[#f7f7fa] px-[6px] text-[33px] leading-[60px]">
        <span className="h-[60px] w-[163px] rounded-[7px] bg-white pr-[3px] text-center font-medium whitespace-nowrap text-[#333]">90%筹码</span>
        <span className="flex-1 pl-[5px] text-center tracking-[0.2px] whitespace-nowrap text-[#666]">
          70%<span className="font-[350]">筹码</span>
        </span>
      </div>
      <InfoRow label="价格区间" value="10.39-13.67" />
      <InfoRow label="集中度" value="13.63%" />
      <InfoRow label="说明" value="2025-11-11">
        <svg className="ml-[12px] size-[30px]" viewBox="0 0 30 30">
          <circle cx="15" cy="15" r="15" fill="#ccc" />
          <path d="M15 13v9.500M15 7.500v1.500" stroke="#fff" strokeWidth="3.500" strokeLinecap="round" />
        </svg>
      </InfoRow>
    </div>
  );
}

function Banner() {
  return (
    <div className="mx-[18px] flex h-[90px] items-center rounded-full bg-[#fcece3] pl-[29px] text-[#dc5412]">
      <svg className="h-[40px] w-[48px]" viewBox="0 0 48 40">
        <path d="M1 12h4v16H1zM10 12L42 2V0h5v40h-5v-2l-9-3c-2 4-12 3-13-2l-10-5z" fill="#e85207" />
      </svg>
      <span className="ml-[52px] w-[817px] bg-linear-to-r from-[#dc5412] from-94% to-[#dc5412]/0 to-99% bg-clip-text font-['Roboto','Noto_Sans_CJK_TC',sans-serif] text-[39px] leading-[60px] font-[350] tracking-[-0.1px] whitespace-nowrap text-transparent">
        <span className="font-['Roboto','Noto_Sans_CJK_SC',sans-serif]">看准了</span>？
        <span className="font-['Roboto','Noto_Sans_CJK_SC',sans-serif]">别让本金限制你的想象力</span>！
        <span className="font-['Roboto','Noto_Sans_CJK_SC',sans-serif]">融资通道&gt;&gt;</span>
      </span>
      <span className="ml-[9px] h-[36px] w-[1.500px] bg-[#dc7a4a]" />
      <svg className="ml-[16px] size-[34px]" viewBox="0 0 34 34">
        <path d="M2 2l30 30M32 2L2 32" stroke="#dc5412" strokeWidth="3" />
      </svg>
    </div>
  );
}

function NavItem({ label, className, children }: { label: string; className: string; children: ReactNode }) {
  return (
    <div className={`flex flex-col items-center text-[45px] leading-[50px] font-[350] whitespace-nowrap text-[#666] ${className}`}>
      <svg className="mt-[6px] h-[64px] w-[66px] shrink-0" viewBox="-33 -32 66 64" fill="none" stroke="#666" strokeWidth="3">
        {children}
      </svg>
      <span className="mt-[14px]">{label}</span>
    </div>
  );
}

function BottomNav() {
  return (
    <nav className="flex h-[136px] border-t-2 border-[#d3d6d8] bg-[#f6f8fa]">
      <div className="w-[273px] pl-[30px]">
        <svg className="mt-[7px] ml-[98px] block h-[8px] w-[21px]" viewBox="0 0 21 8">
          <path d="M0 8L10.500 0 21 8z" fill="#777" />
        </svg>
        <div className="mt-[6px] pl-[14px] text-[51.500px] leading-[58px] text-[#119911]">4002.76</div>
        <div className="mt-[-2px] flex h-[46px] items-center justify-between leading-none">
          <span className="text-[46px] font-[350] text-[#666]">上证</span>
          <span className="mt-[-2px] text-[41px] text-[#119911]">-0.39%</span>
        </div>
      </div>
      <NavItem label="交易" className="w-[203px]">
        <path d="M-17-22.500A28 28 0 0 1 24.500 13M24.500 13l-1-8M24.500 13l7-5M17 22.500A28 28 0 0 1-24.500-13M-24.500-13l-7 4M-24.500-13l1 8" />
        <path d="M-10-13L0-2 10-13M0-2v17M-10-2h20M-10 7h20" />
      </NavItem>
      <NavItem label="发帖" className="w-[202px]">
        <path d="M11-26h-31q-6 0-6 6v40q0 6 6 6h40q6 0 6-6v-31" />
        <path d="M-9 8l4-10 23-20 6 6-23 20zM20-23l5-4 4 4-5 5z" fill="#666" stroke="none" />
      </NavItem>
      <NavItem label="功能" className="w-[200px]">
        <rect x="-24.500" y="-24.500" width="22" height="22" rx="3.500" />
        <rect x="-24.500" y="3" width="22" height="22" rx="3.500" />
        <rect x="3" y="3" width="22" height="22" rx="3.500" />
        <path d="M14-25.500l11.500 12L14-1.500 2.500-13.500z" strokeLinejoin="round" />
      </NavItem>
      <NavItem label="设自选" className="w-[202px]">
        <circle r="27" />
        <g fill="#666" stroke="none">
          <circle cx="-12" r="3" />
          <circle r="3" />
          <circle cx="12" r="3" />
        </g>
      </NavItem>
    </nav>
  );
}

function SystemNav() {
  return (
    <div className="flex h-[120px] items-center bg-black pl-[276px] text-[#b0b0b0]">
      <svg className="h-[54px] w-[48px]" viewBox="0 0 48 54">
        <path d="M43 4v46L4 27z" fill="none" stroke="currentColor" strokeWidth="3.500" strokeLinejoin="round" />
      </svg>
      <span className="ml-[191px] size-[50px] rounded-full border-[3.500px] border-current" />
      <span className="ml-[192px] size-[46px] rounded-[3px] border-[3.500px] border-current" />
    </div>
  );
}

function App() {
  return (
    <div className={`h-[2160px] w-[1080px] overflow-hidden bg-white ${FONT}`}>
      <StatusBar />
      <Header />
      <QuotePanel />
      <Tabs />
      <Averages />
      <main className="flex h-[1092px] gap-[18px] pl-[12px]">
        <div className="w-[681px]">
          <MainChart />
          <VolumeChart />
          <KdjChart />
        </div>
        <ChipPanel />
      </main>
      <Banner />
      <div className="h-[11px]" />
      <BottomNav />
      <SystemNav />
    </div>
  );
}

export default App;
